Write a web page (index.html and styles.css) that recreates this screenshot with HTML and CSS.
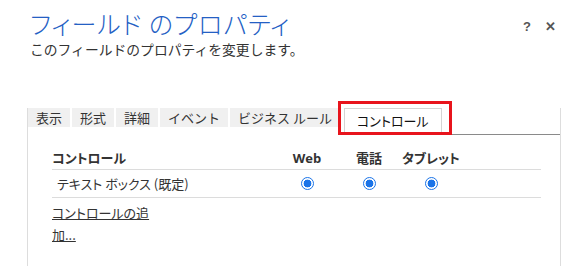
FILE: index.html
```html
<!DOCTYPE html>
<html lang="ja">
  <head>
    <meta charset="UTF-8" />
    <meta name="viewport" content="width=device-width, initial-scale=1.0" />
    <title>フィールド のプロパティ</title>
    <link rel="stylesheet" href="styles.css">
  </head>
  <body>
    <div class="dialog">
      <header class="dialog-head">
        <div class="dialog-titles">
          <h1 class="dialog-title">フィールド のプロパティ</h1>
          <p class="dialog-subtitle">このフィールドのプロパティを変更します。</p>
        </div>
        <div class="dialog-actions">
          <span class="action">?</span>
          <span class="action">✕</span>
        </div>
      </header>

      <section class="panel">
        <nav class="tabs">
          <div class="tab">表示</div>
          <div class="tab">形式</div>
          <div class="tab">詳細</div>
          <div class="tab">イベント</div>
          <div class="tab">ビジネス ルール</div>
          <div class="tab tab-active">コントロール</div>
          <div class="tabs-rest"></div>
        </nav>

        <div class="tab-body">
          <div class="grid-row grid-head">
            <div class="col-name">コントロール</div>
            <div class="col">Web</div>
            <div class="col">電話</div>
            <div class="col">タブレット</div>
          </div>
          <div class="grid-row">
            <div class="col-name cell-text">テキスト ボックス (既定)</div>
            <div class="col"><span class="radio"></span></div>
            <div class="col"><span class="radio"></span></div>
            <div class="col"><span class="radio"></span></div>
          </div>

          <a class="add-link" href="#">コントロールの追加...</a>
        </div>
      </section>
    </div>
  </body>
</html>
```

FILE: styles.css
```css
* {
  margin: 0;
  padding: 0;
  box-sizing: border-box;
}

body {
  background: #ffffff;
  font-family: 'Noto Sans CJK JP', 'Liberation Sans', sans-serif;
  font-feature-settings: 'palt';
  color: #333333;
  overflow: hidden;
}

.dialog {
  height: 266px;
  display: flex;
  flex-direction: column;
}

.dialog-head {
  display: flex;
  justify-content: space-between;
  padding: 8px 25px 0 30px;
}

.dialog-title {
  font-size: 25px;
  font-weight: 300;
  line-height: 30px;
  letter-spacing: 1px;
  color: #2460c4;
}

.dialog-subtitle {
  margin-top: 2px;
  font-size: 13.8px;
  font-feature-settings: normal;
  line-height: 18px;
  color: #333333;
}

.dialog-actions {
  display: flex;
  gap: 14px;
  padding-top: 10px;
  line-height: 18px;
  font-family: 'Liberation Sans', sans-serif;
  font-size: 13px;
  font-weight: bold;
  color: #555555;
}

.panel {
  flex: 1;
  margin: 50px 20px 0 27px;
  border-left: 1px solid #dddddd;
  border-right: 1px solid #dddddd;
}

.tabs {
  display: flex;
  align-items: flex-start;
  gap: 2px;
}

.tab {
  height: 19px;
  padding: 0 8px;
  background: #f0f0f0;
  font-size: 13px;
  font-feature-settings: normal;
  line-height: 19px;
  color: #333333;
  white-space: nowrap;
}

.tab:nth-child(5) {
  margin-right: 2px;
}

.tab-active {
  position: relative;
  height: 27px;
  padding: 0 12px;
  background: #ffffff;
  border: 1px solid #d4d4d4;
  border-bottom: none;
  font-feature-settings: 'palt';
  line-height: 24px;
  color: #111111;
}

/* highlight annotation around the active tab */
.tab-active::after {
  content: '';
  position: absolute;
  top: -8px;
  left: -7px;
  right: -11px;
  bottom: 0;
  border: 3px solid #e8141c;
}

.tabs-rest {
  flex: 1;
  height: 27px;
  border-bottom: 1px solid #8a8a8a;
  margin-left: -2px;
}

.tab-body {
  padding: 11px 19px 0 24px;
}

.grid-row {
  display: flex;
  align-items: center;
  height: 28px;
  border-bottom: 1px solid #dcdcdc;
  font-size: 13px;
  white-space: nowrap;
}

.grid-head {
  height: 24px;
  font-weight: bold;
  color: #333333;
}

.col-name {
  flex: 0 0 224px;
}

.cell-text {
  padding-left: 5px;
}

.col {
  flex: 0 0 62px;
  display: flex;
  justify-content: center;
}

.grid-head .col:nth-child(2) {
  font-family: 'Open Sans', 'Liberation Sans', sans-serif;
}

.radio {
  width: 13px;
  height: 13px;
  border-radius: 50%;
  border: 1.5px solid #1b74e8;
  background: radial-gradient(circle, #1b74e8 0 3.6px, #ffffff 4.2px);
}

.add-link {
  display: block;
  width: 98px;
  margin-top: 4px;
  font-size: 13px;
  line-height: 22px;
  color: #333333;
  text-decoration: underline;
}
```
